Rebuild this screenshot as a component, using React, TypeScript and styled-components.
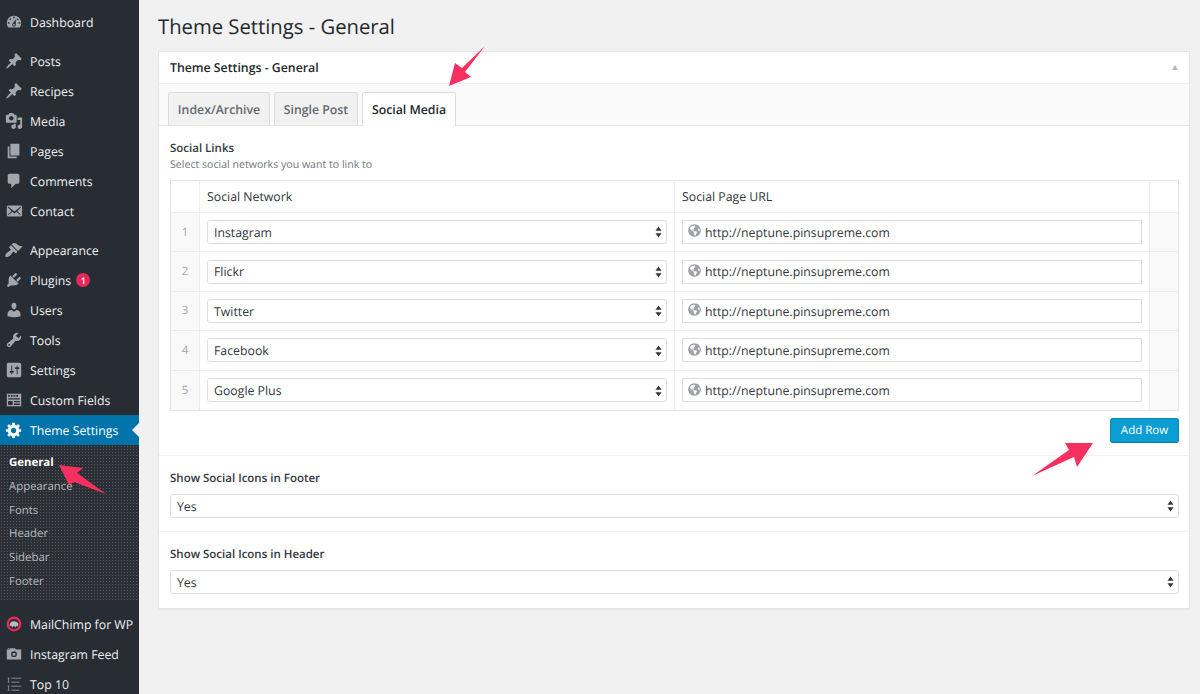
import React from "react";
import styled, { createGlobalStyle } from "styled-components";
import { FaGlobeAmericas } from "react-icons/fa";

const Global = createGlobalStyle`
  html, body { margin: 0; padding: 0; background: #f1f1f1; height: 694px; overflow: hidden; }
  body {
    font-family: "Open Sans", "Liberation Sans", sans-serif;
    font-size: 12.3px;
    color: #32373c;
    text-rendering: geometricPrecision;
  }
  * { box-sizing: border-box; }
`;

const Page = styled.div`
  position: relative;
  display: flex;
  width: 1200px;
  height: 694px;
  overflow: hidden;
`;

const Sidebar = styled.nav`
  width: 139px;
  flex: none;
  background: #282d34;
  padding-top: 7px;
`;

const MenuGroup = styled.div`
  margin-bottom: 9px;
`;

const MenuItem = styled.div<{ $active?: boolean }>`
  position: relative;
  display: flex;
  align-items: center;
  height: 30px;
  padding-left: 5px;
  font-size: 12.3px;
  background: ${(p) => (p.$active ? "#0073aa" : "transparent")};
  color: ${(p) => (p.$active ? "#fff" : "#eef0f1")};
`;

const Glyph = styled.svg<{ $active?: boolean }>`
  flex: none;
  width: 18px;
  height: 18px;
  margin-right: 7px;
  fill: ${(p) => (p.$active ? "#fff" : "#a3a7ab")};
`;

const Badge = styled.span`
  display: inline-flex;
  align-items: center;
  justify-content: center;
  width: 14px;
  height: 14px;
  margin-left: 5px;
  border-radius: 50%;
  background: #e8265e;
  color: #fff;
  font-size: 9px;
  font-weight: 600;
`;

const ActiveNotch = styled.span`
  position: absolute;
  right: 0;
  top: 50%;
  margin-top: -7px;
  border: 7px solid transparent;
  border-left-width: 0;
  border-right-color: #f1f1f1;
`;

const SubMenu = styled.div`
  height: 155px;
  padding-top: 5.6px;
  margin-bottom: 9px;
  background-color: #2c3036;
  background-image: radial-gradient(#55595e 0.7px, transparent 0.9px);
  background-size: 3px 3px;
`;

const SubItem = styled.div<{ $current?: boolean }>`
  display: flex;
  align-items: center;
  height: 23.8px;
  padding-left: 9px;
  font-size: 11.4px;
  color: ${(p) => (p.$current ? "#fff" : "#b4b9be")};
  font-weight: ${(p) => (p.$current ? 700 : 400)};
`;

const Main = styled.main`
  flex: 1;
  padding: 0 10px 0 19px;
  min-width: 0;
`;

const Title = styled.h1`
  margin: 0;
  height: 51px;
  padding-top: 11px;
  font-size: 20.25px;
  line-height: 30px;
  font-weight: 400;
  color: #23282d;
`;

const Panel = styled.section`
  height: 558px;
  background: #fff;
  border: 1px solid #e5e5e5;
  box-shadow: 0 1px 1px rgba(0, 0, 0, 0.04);
`;

const PanelHead = styled.header`
  display: flex;
  align-items: center;
  justify-content: space-between;
  height: 32px;
  padding: 0 11px;
  border-bottom: 1px solid #eeeeee;
  font-size: 12.3px;
  font-weight: 600;
  color: #23282d;
`;

const Caret = styled.span`
  width: 0;
  height: 0;
  border: 3.5px solid transparent;
  border-top-width: 0;
  border-bottom: 5px solid #b4b9be;
`;

const TabBar = styled.div`
  display: flex;
  align-items: flex-end;
  gap: 4px;
  height: 42px;
  padding-left: 9px;
  background: #fafafa;
  border-bottom: 1px solid #e5e5e5;
`;

const Tab = styled.div<{ $on?: boolean; $w: number }>`
  display: flex;
  align-items: center;
  justify-content: center;
  width: ${(p) => p.$w}px;
  height: ${(p) => (p.$on ? 34 : 33)}px;
  margin-bottom: ${(p) => (p.$on ? -1 : 0)}px;
  font-size: 12.3px;
  font-weight: 600;
  background: ${(p) => (p.$on ? "#fff" : "#f1f1f1")};
  color: ${(p) => (p.$on ? "#23282d" : "#646970")};
  border: 1px solid #dcdcdc;
  border-bottom: 0;
  border-radius: 3px 3px 0 0;
`;

const Body = styled.div`
  padding: 0 10px 0 11px;
`;

const Field = styled.div<{ $top: number }>`
  padding-top: ${(p) => p.$top}px;
`;

const Label = styled.div`
  padding-top: 1px;
  font-size: 11.5px;
  line-height: 16px;
  font-weight: 600;
  color: #32373c;
`;

const Hint = styled.div`
  font-size: 10.6px;
  line-height: 16px;
  margin-bottom: 7px;
  color: #72777c;
`;

const Table = styled.div`
  border: 1px solid #e5e5e5;
`;

const Row = styled.div<{ $head?: boolean }>`
  display: grid;
  grid-template-columns: 28px 475px 475px 1fr;
  height: ${(p) => (p.$head ? "32px" : "39.4px")};
  border-bottom: 1px solid #ececec;
  &:last-child { border-bottom: 0; }
`;

const Cell = styled.div`
  display: flex;
  align-items: center;
  padding: 0 7px;
  border-left: 1px solid #ececec;
  font-size: 12.3px;
  color: #32373c;
  min-width: 0;
`;

const IndexCell = styled.div<{ $head?: boolean }>`
  display: flex;
  align-items: center;
  justify-content: center;
  font-size: 11.5px;
  color: #a2a6aa;
  background: ${(p) => (p.$head ? "#fff" : "#f9f9f9")};
`;

const EndCell = styled.div<{ $head?: boolean }>`
  border-left: 1px solid #ececec;
  background: ${(p) => (p.$head ? "#fff" : "#f9f9f9")};
`;

const Select = styled.div`
  display: flex;
  align-items: center;
  justify-content: space-between;
  width: 100%;
  height: 24px;
  padding: 0.6px 4px 0 6px;
  background: #fff;
  border: 1px solid #dddddd;
  border-radius: 3px;
  font-size: 12.3px;
  color: #32373c;
`;

const Input = styled.div`
  display: flex;
  align-items: center;
  gap: 4px;
  width: 100%;
  height: 24px;
  padding: 0.6px 5px 0;
  background: #fff;
  border: 1px solid #dddddd;
  font-size: 12.3px;
  color: #32373c;
`;

const GlobeIcon = styled.span`
  display: flex;
  color: #9ea2a6;
  font-size: 13px;
  margin-top: -3px;
`;

const ButtonRow = styled.div`
  display: flex;
  justify-content: flex-end;
  padding: 7px 0 12px;
`;

const Button = styled.div`
  display: flex;
  align-items: center;
  justify-content: center;
  width: 69px;
  height: 25px;
  background: #0a9ed2;
  border: 1px solid #0a86b4;
  border-bottom-color: #0674a0;
  border-radius: 3px;
  color: #fff;
  font-size: 11.5px;
`;

const FieldLabel = styled(Label)`
  margin-bottom: 7px;
`;

const Divider = styled.div`
  height: 1px;
  background: #f0f0f0;
`;

const DividerLow = styled(Divider)`
  margin-top: 13px;
`;

const Arrow = styled.svg<{ $x: number; $y: number }>`
  position: absolute;
  left: ${(p) => p.$x}px;
  top: ${(p) => p.$y}px;
  overflow: visible;
`;

const Arrows = () => (
  <svg width="7" height="12" viewBox="0 0 8 14" fill="#32373c">
    <path d="M4 0.5 7.5 5.5H0.5Z" />
    <path d="M4 13.5 0.5 8.5H7.5Z" />
  </svg>
);

const P = {
  dashboard: "M3.76 16h12.48c1.1-1.37 1.76-3.11 1.76-5 0-4.42-3.58-8-8-8s-8 3.58-8 8c0 1.89.66 3.63 1.76 5zM10 4c.55 0 1 .45 1 1s-.45 1-1 1-1-.45-1-1 .45-1 1-1zM6 6c.55 0 1 .45 1 1s-.45 1-1 1-1-.45-1-1 .45-1 1-1zm8 0c.55 0 1 .45 1 1s-.45 1-1 1-1-.45-1-1 .45-1 1-1zm-5.37 5.55L12 7v6c0 1.1-.9 2-2 2s-2-.9-2-2c0-.57.24-1.08.63-1.45zM4 10c.55 0 1 .45 1 1s-.45 1-1 1-1-.45-1-1 .45-1 1-1zm12 0c.55 0 1 .45 1 1s-.45 1-1 1-1-.45-1-1 .45-1 1-1zm-5 3c0-.55-.45-1-1-1s-1 .45-1 1 .45 1 1 1 1-.45 1-1z",
  pin: "M10.44 3.02l1.82-1.82 6.36 6.35-1.83 1.82c-1.05-.68-2.48-.57-3.41.36l-.75.75c-.92.93-1.04 2.35-.35 3.41l-1.83 1.82-2.41-2.41-2.8 2.79c-.42.42-3.38 2.71-3.8 2.29s1.86-3.39 2.28-3.81l2.79-2.79L4.1 9.36l1.83-1.82c1.05.69 2.48.57 3.4-.36l.75-.75c.93-.92 1.05-2.35.36-3.41z",
  media: "M13 11V4c0-.55-.45-1-1-1h-1.67L9 1H5L3.67 3H2c-.55 0-1 .45-1 1v7c0 .55.45 1 1 1h10c.55 0 1-.45 1-1zM7 4.5c1.38 0 2.5 1.12 2.5 2.5S8.38 9.5 7 9.5 4.5 8.38 4.5 7 5.62 4.5 7 4.5zM14 6h5v10.5c0 1.38-1.12 2.5-2.5 2.5S14 17.88 14 16.5s1.12-2.5 2.5-2.5c.17 0 .34.02.5.05V9h-3V6zm-4 8.05V13h2v3.5c0 1.38-1.12 2.5-2.5 2.5S7 17.88 7 16.5 8.12 14 9.5 14c.17 0 .34.02.5.05z",
  page: "M6 15V2h10v13H6zm-1 1h8v2H3V5h2v11z",
  comment: "M5 2h9c1.1 0 2 .9 2 2v7c0 1.1-.9 2-2 2h-2l-5 5v-5H5c-1.1 0-2-.9-2-2V4c0-1.1.9-2 2-2z",
  mail: "M19 14.5v-9c0-.83-.67-1.5-1.5-1.5H3.49c-.83 0-1.5.67-1.5 1.5v9c0 .83.67 1.5 1.5 1.5H17.5c.83 0 1.5-.67 1.5-1.5zm-1.31-9.11c.33.33.15.67-.03.84L13.6 9.95l3.9 4.06c.12.14.2.36.06.51-.13.16-.43.15-.56.05l-4.37-3.73-2.14 1.95-2.13-1.95-4.37 3.73c-.13.1-.43.11-.56-.05-.14-.15-.06-.37.06-.51l3.9-4.06-4.06-3.72c-.18-.17-.36-.51-.03-.84s.67-.17.95.07l6.24 5.04 6.25-5.04c.28-.24.62-.4.95-.07z",
  brush: "M14.48 11.06L7.41 3.99l1.5-1.5c.5-.56 2.3-.47 3.51.32 1.21.8 1.43 1.28 2.91 2.1 1.18.64 2.45 1.26 4.45.85zm-.71.71L6.7 4.7 4.93 6.47c-.39.39-.39 1.02 0 1.41l1.06 1.06c.39.39.39 1.03 0 1.42-.6.6-1.43 1.11-2.21 1.69-.35.26-.7.53-1.01.84C1.43 13.23.39 15.26.39 16.55c0 .34.12.65.36.89.25.24.56.37.89.37 1.29 0 3.32-1.05 4.66-2.39.31-.31.59-.66.85-1.02.58-.77 1.09-1.6 1.69-2.2.39-.39 1.03-.39 1.42 0l1.06 1.06c.39.39 1.02.39 1.41 0z",
  plug: "M13.11 4.36L9.87 7.6 8 5.73l3.24-3.24c.35-.34 1.05-.2 1.56.32.52.51.66 1.21.31 1.55zm-8 1.77l.91-1.12 9.01 9.01-1.19.84c-.71.71-2.63 1.16-3.82 1.16H6.14L4.9 17.26c-.59.59-1.54.59-2.12 0-.59-.58-.59-1.53 0-2.12l1.24-1.24v-3.88c0-1.13.4-3.19 1.09-3.89zm7.26 3.97l3.24-3.24c.34-.35 1.04-.21 1.55.31.52.51.66 1.21.31 1.55l-3.24 3.25z",
  user: "M10 9.25c-2.27 0-2.73-3.44-2.73-3.44C7 4.02 7.82 2 9.97 2c2.16 0 2.98 2.02 2.71 3.81 0 0-.41 3.44-2.68 3.44zm0 2.57L12.72 10c2.39 0 4.52 2.33 4.52 4.53v2.49s-3.65 1.13-7.24 1.13c-3.65 0-7.24-1.13-7.24-1.13v-2.49c0-2.25 1.94-4.48 4.47-4.48z",
  wrench: "M16.68 9.77c-1.34 1.34-3.3 1.67-4.95.99l-5.41 6.52c-.99.99-2.59.99-3.58 0s-.99-2.59 0-3.57l6.52-5.42c-.68-1.65-.35-3.61.99-4.95 1.28-1.28 3.12-1.62 4.72-1.06l-2.89 2.89 2.82 2.82 2.86-2.87c.53 1.58.18 3.39-1.08 4.65zM3.81 16.21c.4.39 1.04.39 1.43 0 .4-.4.4-1.04 0-1.43-.39-.4-1.03-.4-1.43 0-.39.39-.39 1.03 0 1.43z",
  settings: "M18 16V4c0-1.1-.9-2-2-2H4c-1.1 0-2 .9-2 2v12c0 1.1.9 2 2 2h12c1.1 0 2-.9 2-2zM8 11h1c.55 0 1 .45 1 1s-.45 1-1 1H8v1.5c0 .28-.22.5-.5.5s-.5-.22-.5-.5V13H6c-.55 0-1-.45-1-1s.45-1 1-1h1V5.5c0-.28.22-.5.5-.5s.5.22.5.5V11zm5-2h-1c-.55 0-1-.45-1-1s.45-1 1-1h1V5.5c0-.28.22-.5.5-.5s.5.22.5.5V7h1c.55 0 1 .45 1 1s-.45 1-1 1h-1v5.5c0 .28-.22.5-.5.5s-.5-.22-.5-.5V9z",
  fields: "M2 3h16v14H2zM3.5 4.5v2h2v-2zm3 0v2h2v-2zm3 0v2h2v-2zm3 0v2h2v-2zm-9 3.5v1.5h13V8zm0 3v4.5h5V11zm6.5 0v1.5h6.5V11zm0 3v1.5h6.5V14z",
  cog: "M18 12h-2.18c-.17.7-.44 1.35-.81 1.93l1.54 1.54-2.1 2.1-1.54-1.54c-.58.36-1.23.63-1.91.79V19H8v-2.18c-.68-.16-1.33-.43-1.91-.79l-1.54 1.54-2.12-2.12 1.54-1.54c-.36-.58-.63-1.23-.79-1.91H1V9.03h2.17c.16-.7.44-1.35.8-1.94L2.43 5.55l2.1-2.1 1.54 1.54c.58-.37 1.24-.64 1.93-.81V2h3v2.18c.68.16 1.33.43 1.91.79l1.54-1.54 2.12 2.12-1.54 1.54c.36.59.64 1.24.8 1.94H18V12zm-8.5 1.5c1.66 0 3-1.34 3-3s-1.34-3-3-3-3 1.34-3 3 1.34 3 3 3z",
  camera: "M2 5h3l1-1.5h5L12 5h6v11H2zM3 3.5h2V4.5H3zM10 7a3.2 3.2 0 1 0 0 6.4A3.2 3.2 0 0 0 10 7zm0 1.5a1.7 1.7 0 1 1 0 3.4 1.7 1.7 0 0 1 0-3.4z",
  top: "M3 3h2v.8H3zM7 3h11v.8H7zM3 7.5h2v.8H3zM7 7.5h9v.8H7zM3 12h2v.8H3zM7 12h11v.8H7zM3 16.5h2v.8H3zM7 16.5h9v.8H7zM3.6 3.8h.7v3.7h-.7zM3.6 12.8h.7v3.7h-.7z",
};

const Icon = ({ d, active }: { d: string; active?: boolean }) => (
  <Glyph viewBox="0 0 20 20" $active={active}><path fillRule="evenodd" d={d} /></Glyph>
);

const ChimpLogo = () => (
  <Glyph viewBox="0 0 20 20">
    <circle cx="10" cy="10" r="7" fill="#3a2a32" stroke="#e32a5c" strokeWidth="2.4" />
    <path d="M5 12c0-3 2-5 5-5 2 0 4 1 5 3l-1 3-1.5-1-1 2-1.5-2-2 2-1-2z" fill="#b9bcc0" />
  </Glyph>
);

const menuA = [
  { t: "Posts", d: P.pin },
  { t: "Recipes", d: P.pin },
  { t: "Media", d: P.media },
  { t: "Pages", d: P.page },
  { t: "Comments", d: P.comment },
  { t: "Contact", d: P.mail },
];
const menuB = [
  { t: "Appearance", d: P.brush },
  { t: "Plugins", d: P.plug, badge: "1" },
  { t: "Users", d: P.user },
  { t: "Tools", d: P.wrench },
  { t: "Settings", d: P.settings },
  { t: "Custom Fields", d: P.fields },
];
const subs = ["General", "Appearance", "Fonts", "Header", "Sidebar", "Footer"];
const rows = ["Instagram", "Flickr", "Twitter", "Facebook", "Google Plus"];

export default function App() {
  return (
    <Page>
      <Global />
      <Sidebar>
        <MenuGroup>
          <MenuItem><Icon d={P.dashboard} />Dashboard</MenuItem>
        </MenuGroup>
        <MenuGroup>
          {menuA.map((m) => (
            <MenuItem key={m.t}><Icon d={m.d} />{m.t}</MenuItem>
          ))}
        </MenuGroup>
        {menuB.map((m) => (
          <MenuItem key={m.t}>
            <Icon d={m.d} />{m.t}{m.badge && <Badge>{m.badge}</Badge>}
          </MenuItem>
        ))}
        <MenuItem $active>
          <Icon d={P.cog} active />Theme Settings<ActiveNotch />
        </MenuItem>
        <SubMenu>
          {subs.map((s, i) => <SubItem key={s} $current={i === 0}>{s}</SubItem>)}
        </SubMenu>
        <MenuItem><ChimpLogo />MailChimp for WP</MenuItem>
        <MenuItem><Icon d={P.camera} />Instagram Feed</MenuItem>
        <MenuItem><Icon d={P.top} />Top 10</MenuItem>
      </Sidebar>
      <Main>
        <Title>Theme Settings - General</Title>
        <Panel>
          <PanelHead>Theme Settings - General<Caret /></PanelHead>
          <TabBar>
            <Tab $w={102}>Index/Archive</Tab>
            <Tab $w={84}>Single Post</Tab>
            <Tab $w={94} $on>Social Media</Tab>
          </TabBar>
          <Body>
            <Field $top={14}>
              <Label>Social Links</Label>
              <Hint>Select social networks you want to link to</Hint>
              <Table>
                <Row $head>
                  <IndexCell $head />
                  <Cell>Social Network</Cell>
                  <Cell>Social Page URL</Cell>
                  <EndCell $head />
                </Row>
                {rows.map((r, i) => (
                  <Row key={r}>
                    <IndexCell>{i + 1}</IndexCell>
                    <Cell><Select>{r}<Arrows /></Select></Cell>
                    <Cell>
                      <Input><GlobeIcon><FaGlobeAmericas /></GlobeIcon>http://neptune.pinsupreme.com</Input>
                    </Cell>
                    <EndCell />
                  </Row>
                ))}
              </Table>
              <ButtonRow><Button>Add Row</Button></ButtonRow>
            </Field>
          </Body>
          <Divider />
          <Body>
            <Field $top={14}>
              <FieldLabel>Show Social Icons in Footer</FieldLabel>
              <Select>Yes<Arrows /></Select>
            </Field>
          </Body>
          <DividerLow />
          <Body>
            <Field $top={14}>
              <FieldLabel>Show Social Icons in Header</FieldLabel>
              <Select>Yes<Arrows /></Select>
            </Field>
          </Body>
        </Panel>
      </Main>
      <Arrow $x={447} $y={44} width="40" height="44" viewBox="0 0 40 44" fill="#f8305f">
        <path d="M38 2 L18 28 L24 33 L2 42 L8 19 L15 24 Z" />
      </Arrow>
      <Arrow $x={1031} $y={442} width="62" height="36" viewBox="0 0 62 36" fill="#f8305f">
        <path d="M1 34 L38 8 L34 1 L62 1 L46 25 L43 15 Z" />
      </Arrow>
      <Arrow $x={58} $y={463} width="50" height="33" viewBox="0 0 50 33" fill="#f8305f">
        <path d="M1 2 L25 5 L19 10 L48 31 L16 19 L11 22 Z" />
      </Arrow>
    </Page>
  );
}
